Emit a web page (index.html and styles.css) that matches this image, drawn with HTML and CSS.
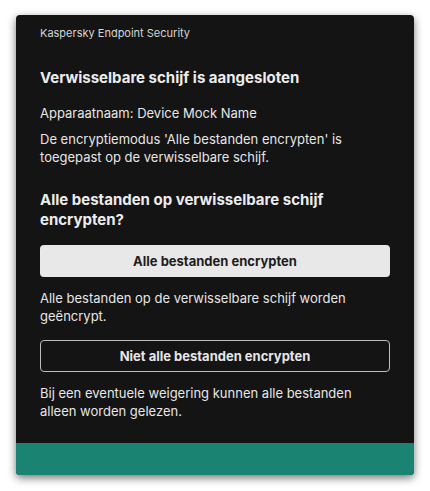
FILE: index.html
```html
<!DOCTYPE html>
<html lang="nl">
<head>
    <meta charset="UTF-8">
    <meta name="viewport" content="width=device-width, initial-scale=1.0">
    <title>Kaspersky Endpoint Security</title>
    <link rel="stylesheet" href="styles.css">
</head>
<body>
    <div class="window">
        <div class="titlebar">Kaspersky Endpoint Security</div>

        <div class="content">
            <h1 class="title">Verwisselbare schijf is aangesloten</h1>
            <p class="device">Apparaatnaam: Device Mock Name</p>
            <p class="info">De encryptiemodus 'Alle bestanden encrypten' is toegepast op de verwisselbare schijf.</p>

            <h2 class="question">Alle bestanden op verwisselbare schijf encrypten?</h2>

            <button class="btn btn-primary">Alle bestanden encrypten</button>
            <p class="hint">Alle bestanden op de verwisselbare schijf worden geëncrypt.</p>

            <button class="btn btn-outline">Niet alle bestanden encrypten</button>
            <p class="hint">Bij een eventuele weigering kunnen alle bestanden alleen worden gelezen.</p>
        </div>

        <div class="footer"></div>
    </div>
</body>
</html>
```

FILE: styles.css
```css
body {
    font-family: Inter, "Noto Sans", sans-serif;
    background-color: #fff;
    margin: 0;
    padding: 15px 16px;
}

.window {
    width: 398px;
    background-color: #141414;
    border-radius: 4px;
    box-shadow: 0 3px 8px rgba(0, 0, 0, 0.55);
    overflow: hidden;
    color: #e6e6e6;
}

.titlebar {
    font-size: 11px;
    line-height: 16px;
    color: #d4d4d4;
    padding: 10px 24px 0;
}

.content {
    padding: 27px 24px 23px;
}

.title, .question {
    font-size: 15px;
    font-weight: 700;
    line-height: 20px;
    margin: 0;
    color: #ececec;
}

.question {
    margin-top: 24px;
    margin-bottom: 15px;
}

.device, .info, .hint {
    font-size: 13px;
    line-height: 18px;
    margin: 0;
}

.device {
    margin-top: 16px;
}

.info {
    margin-top: 8px;
}

.hint {
    margin-top: 12px;
}

.btn {
    display: block;
    width: 100%;
    height: 32px;
    font-family: inherit;
    font-size: 13px;
    font-weight: 700;
    border-radius: 4px;
    cursor: pointer;
}

.btn-primary {
    background-color: #e8e8e8;
    color: #1d1d1d;
    border: none;
}

.btn-outline {
    background-color: transparent;
    color: #e6e6e6;
    border: 1px solid #bdbdbd;
    margin-top: 15px;
}

.footer {
    height: 32px;
    background-color: #1a8371;
}
```
